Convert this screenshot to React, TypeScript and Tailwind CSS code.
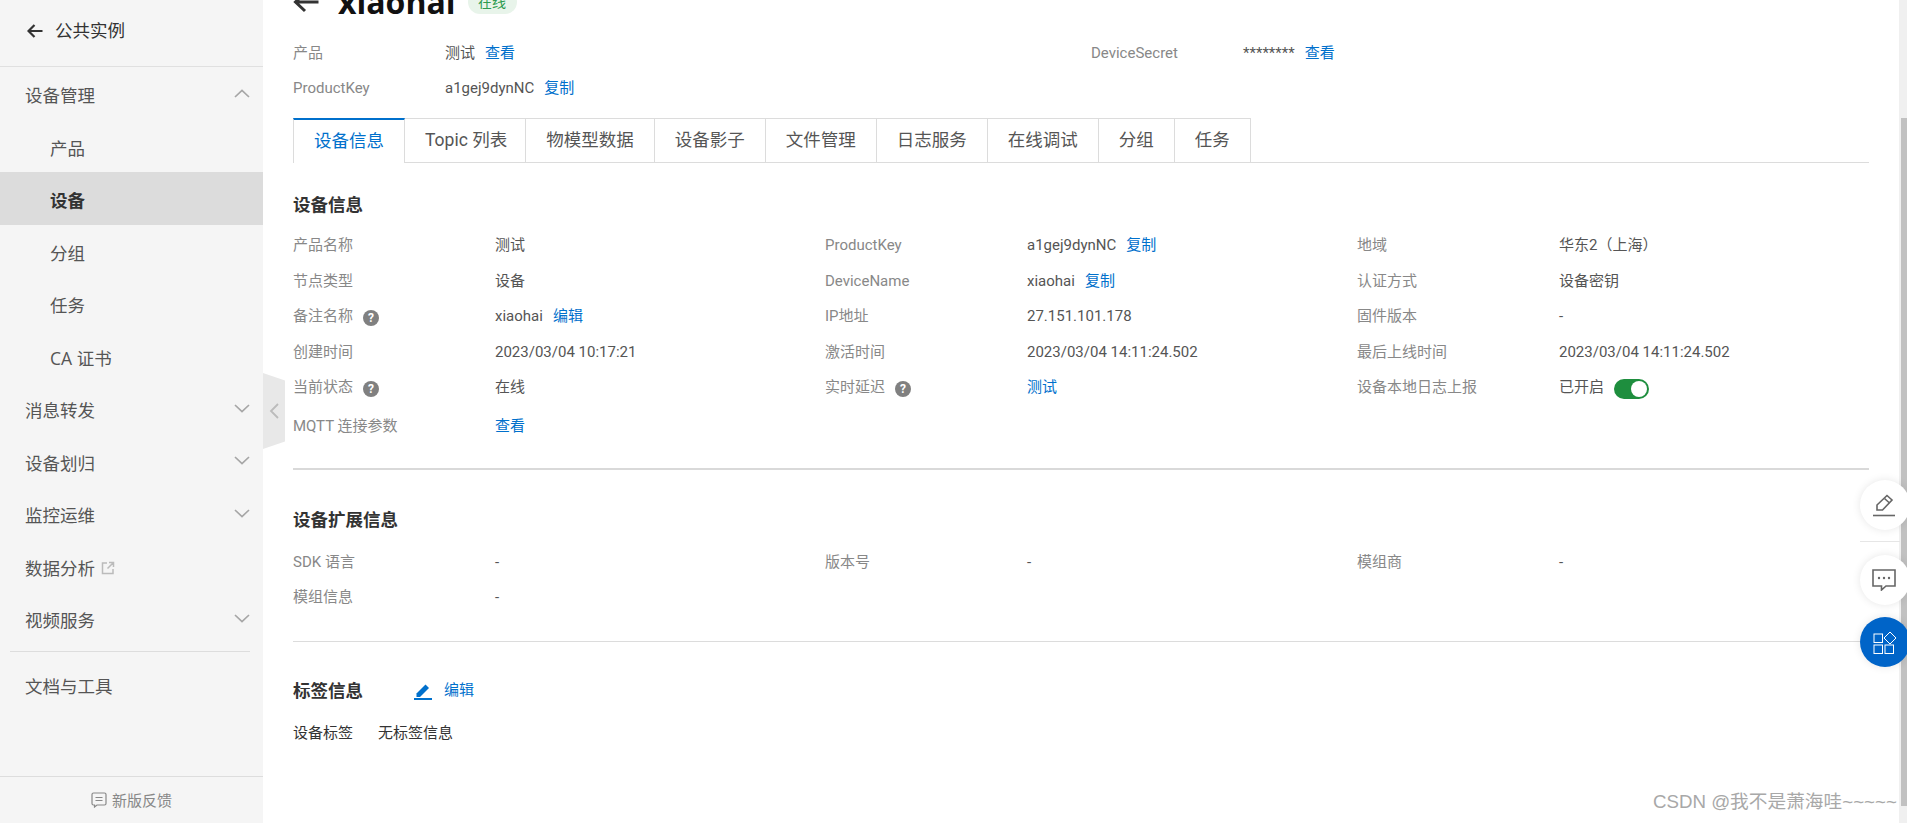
import React from "react";

const Chevron = ({ up = false }: { up?: boolean }) => (
  <svg width="16" height="9" viewBox="0 0 16 9" fill="none" className="shrink-0">
    <polyline
      points={up ? "1,8 8,1.5 15,8" : "1,1 8,7.5 15,1"}
      stroke="#a6a6a6"
      strokeWidth="1.7"
    />
  </svg>
);

const NavRow = ({
  label,
  open,
  chevron = true,
  children,
}: {
  label: string;
  open?: boolean;
  chevron?: boolean;
  children?: React.ReactNode;
}) => (
  <div className="h-[52.5px] pl-[25px] pr-[13px] flex items-center justify-between text-[17.5px] text-[#555]">
    <div className="flex items-center gap-[6px] pt-[4px]">
      {label}
      {children}
    </div>
    {chevron && <Chevron up={open} />}
  </div>
);

const SubRow = ({ label, active }: { label: string; active?: boolean }) => (
  <div
    className={
      active
        ? "h-[52.5px] pl-[50px] flex items-center text-[17.5px] pt-[4px] bg-[#dcdcdc] font-bold text-[#333]"
        : "h-[52.5px] pl-[50px] flex items-center text-[17.5px] pt-[4px] text-[#555]"
    }
  >
    {label}
  </div>
);

const Sidebar = () => (
  <div className="w-[263px] shrink-0 h-full bg-[#f5f5f5] flex flex-col">
    <div className="h-[67px] shrink-0 border-b border-[#e0e0e0] pl-[27px] pb-[5px] flex items-center gap-[12px] text-[17.5px] text-[#333]">
      <svg width="16" height="14" viewBox="0 0 16 14" fill="none">
        <path d="M15.5 7H2M7.5 1L1.5 7l6 6" stroke="#333" strokeWidth="2.2" />
      </svg>
      公共实例
    </div>
    <NavRow label="设备管理" open />
    <SubRow label="产品" />
    <SubRow label="设备" active />
    <SubRow label="分组" />
    <SubRow label="任务" />
    <SubRow label="CA 证书" />
    <NavRow label="消息转发" />
    <NavRow label="设备划归" />
    <NavRow label="监控运维" />
    <NavRow label="数据分析" chevron={false}>
      <svg width="14" height="14" viewBox="0 0 14 14" fill="none" className="mt-[1px]">
        <path d="M6 2H1.5v10.5H12V8M8 1.5h4.5V6M12.5 1.5L6.5 7.5" stroke="#bbbbbb" strokeWidth="1.5" />
      </svg>
    </NavRow>
    <NavRow label="视频服务" />
    <div className="mx-[10px] w-[240px] mt-[6px] border-t border-[#dddddd]" />
    <div className="mt-[6px]">
      <NavRow label="文档与工具" chevron={false} />
    </div>
    <div className="mt-auto h-[47px] border-t border-[#dddddd] flex items-center justify-center gap-[5px] text-[15px] text-[#888]">
      <svg width="16" height="16" viewBox="0 0 16 16" fill="none">
        <path d="M2.5 1h11A1.5 1.5 0 0 1 15 2.5v9a1.5 1.5 0 0 1-1.5 1.5H6l-2.5 2v-2h-1A1.5 1.5 0 0 1 1 11.5v-9A1.5 1.5 0 0 1 2.5 1z" stroke="#888" strokeWidth="1.2" />
        <path d="M4.5 5.5h7M4.5 8.5h7" stroke="#888" strokeWidth="1.2" />
      </svg>
      新版反馈
    </div>
  </div>
);

const Link = ({ children }: { children: React.ReactNode }) => (
  <span className="text-[#0070cc] ml-[10px]">{children}</span>
);

const Help = () => (
  <span className="ml-[10px] mt-[3px] w-[16px] h-[16px] rounded-full bg-[#808080] text-white text-[12px] font-bold flex items-center justify-center leading-none">
    ?
  </span>
);

const Field = ({
  label,
  help,
  children,
  w = "w-[202px]",
}: {
  label: string;
  help?: boolean;
  children?: React.ReactNode;
  w?: string;
}) => (
  <div className="flex items-center h-[35.5px] pb-[3px]">
    <div className={`${w} shrink-0 flex items-center text-[#888]`}>
      {label}
      {help && <Help />}
    </div>
    <div className="flex items-center text-[#555]">{children}</div>
  </div>
);

const Heading = ({ children }: { children: React.ReactNode }) => (
  <div className="h-[24px] pb-[2px] flex items-center text-[17.5px] font-bold text-[#333]">{children}</div>
);

const tabs = ["设备信息", "Topic 列表", "物模型数据", "设备影子", "文件管理", "日志服务", "在线调试", "分组", "任务"];

const Tabs = () => (
  <div className="mt-[10.5px] w-[1576px] h-[45px] flex border-b border-[#dcdcdc]">
    {tabs.map((t, i) =>
      i === 0 ? (
        <div
          key={t}
          className="h-[45px] px-[20px] flex items-center text-[17.5px] text-[#0070cc] border-t-2 border-t-[#0070cc] border-l border-l-[#dcdcdc] border-r border-r-[#dcdcdc] bg-white"
        >
          {t}
        </div>
      ) : (
        <div
          key={t}
          className={
            i === 1
              ? "h-[44px] pl-[20px] pr-[18px] flex items-center text-[17.5px] text-[#555] border-t border-t-[#dcdcdc] border-r border-r-[#dcdcdc]"
              : "h-[44px] px-[20px] flex items-center text-[17.5px] text-[#555] border-t border-t-[#dcdcdc] border-r border-r-[#dcdcdc]"
          }
        >
          {t}
        </div>
      )
    )}
  </div>
);

const Switch = () => (
  <span className="ml-[10px] mt-[3px] w-[35px] h-[20px] rounded-full bg-[#1e8e3e] flex items-center justify-end pr-[2px]">
    <span className="w-[16px] h-[16px] rounded-full bg-white" />
  </span>
);

const Main = () => (
  <div className="flex-1 h-full pl-[30px] text-[15px] overflow-hidden font-['Roboto','Noto_Sans_CJK_SC',sans-serif]">
    {/* page is scrolled a little, the title gets cut by the top edge */}
    <div className="-mt-[16px] h-[36px] flex items-center">
      <svg width="26" height="22" viewBox="0 0 26 22" fill="none">
        <path d="M25.5 11H3M12 2l-9.5 9 9.5 9" stroke="#333" strokeWidth="3" />
      </svg>
      <span className="ml-[19px] text-[32px] font-bold text-[#111] font-['Open_Sans',sans-serif]">xiaohai</span>
      <span className="ml-[12px] h-[24px] w-[49px] rounded-full bg-[#e8f4ea] text-[#2e9b4f] text-[14px] flex items-center justify-center">
        在线
      </span>
    </div>

    <div className="mt-[16.5px] w-[1596px] grid grid-cols-2">
      <Field label="产品" w="w-[152px]">
        测试<Link>查看</Link>
      </Field>
      <Field label="DeviceSecret" w="w-[152px]">
        ********<Link>查看</Link>
      </Field>
      <Field label="ProductKey" w="w-[152px]">
        a1gej9dynNC<Link>复制</Link>
      </Field>
    </div>

    <Tabs />

    <div className="mt-[31px]">
      <Heading>设备信息</Heading>
    </div>
    <div className="mt-[11px] w-[1596px] grid grid-cols-3">
      <Field label="产品名称">测试</Field>
      <Field label="ProductKey">
        a1gej9dynNC<Link>复制</Link>
      </Field>
      <Field label="地域">华东2（上海）</Field>
      <Field label="节点类型">设备</Field>
      <Field label="DeviceName">
        xiaohai<Link>复制</Link>
      </Field>
      <Field label="认证方式">设备密钥</Field>
      <Field label="备注名称" help>
        xiaohai<Link>编辑</Link>
      </Field>
      <Field label="IP地址">27.151.101.178</Field>
      <Field label="固件版本">-</Field>
      <Field label="创建时间">2023/03/04 10:17:21</Field>
      <Field label="激活时间">2023/03/04 14:11:24.502</Field>
      <Field label="最后上线时间">2023/03/04 14:11:24.502</Field>
      <Field label="当前状态" help>
        在线
      </Field>
      <Field label="实时延迟" help>
        <span className="text-[#0070cc]">测试</span>
      </Field>
      <Field label="设备本地日志上报">
        已开启
        <Switch />
      </Field>
    </div>
    <div className="mt-[3px]">
      <Field label="MQTT 连接参数">
        <span className="text-[#0070cc]">查看</span>
      </Field>
    </div>

    <div className="mt-[22.5px] w-[1576px] border-t-2 border-[#d9d9d9]" />

    <div className="mt-[40px]">
      <Heading>设备扩展信息</Heading>
    </div>
    <div className="mt-[12px] w-[1596px] grid grid-cols-3">
      <Field label="SDK 语言">-</Field>
      <Field label="版本号">-</Field>
      <Field label="模组商">-</Field>
      <Field label="模组信息">-</Field>
    </div>

    <div className="mt-[24px] w-[1576px] border-t border-[#dcdcdc]" />

    <div className="mt-[39px] flex items-center">
      <Heading>标签信息</Heading>
      <svg width="18" height="17" viewBox="0 0 18 17" fill="none" className="ml-[51px] -mt-[2px]">
        <path d="M2.5 10.5L11.5 1.5l3.5 3.5-9 9H2.5z" fill="#0070cc" />
        <rect x="0" y="15" width="18" height="2" fill="#0070cc" />
      </svg>
      <span className="ml-[12px] -mt-[5px] text-[#0070cc]">编辑</span>
    </div>
    <div className="mt-[17px] h-[24px] flex items-center text-[#333]">
      <span className="w-[85px]">设备标签</span>
      无标签信息
    </div>
  </div>
);

const Scrollbar = () => (
  <div className="w-[8px] shrink-0 h-full bg-[#f0f0f0] flex flex-col">
    <div className="h-[118px] shrink-0" />
    <div className="ml-[2px] w-[6px] h-[688px] bg-[#c1c1c1]" />
  </div>
);

const FloatButtons = () => (
  <div className="absolute left-[1850px] top-[470px] w-[57px] pl-[10px] pt-[10px] pb-[10px] overflow-hidden flex flex-col items-start">
    <div className="w-[50px] h-[50px] shrink-0 rounded-full bg-white shadow-[0_0_8px_rgba(0,0,0,0.1)] flex items-center justify-center">
      <svg width="24" height="24" viewBox="0 0 24 24" fill="none" className="-ml-[2px]">
        <path d="M15 2.5l5 4.500-9.500 10H5v-5z" stroke="#666" strokeWidth="1.6" />
        <path d="M12.5 5.5l5 4.500" stroke="#666" strokeWidth="1.6" />
        <path d="M1 22.5h22" stroke="#666" strokeWidth="1.6" />
      </svg>
    </div>
    <div className="mt-[11px] w-[40px] border-t border-[#e6e6e6]" />
    <div className="mt-[13px] w-[50px] h-[50px] shrink-0 rounded-full bg-white shadow-[0_0_8px_rgba(0,0,0,0.1)] flex items-center justify-center">
      <svg width="24" height="22" viewBox="0 0 24 22" fill="none" className="-ml-[2px]">
        <path d="M1 1h22v16H14l-4.500 4v-4H1z" stroke="#666" strokeWidth="1.6" />
        <circle cx="7" cy="9" r="1.2" fill="#666" />
        <circle cx="12" cy="9" r="1.2" fill="#666" />
        <circle cx="17" cy="9" r="1.2" fill="#666" />
      </svg>
    </div>
    <div className="mt-[12px] w-[50px] h-[50px] shrink-0 rounded-full bg-[#0064c8] shadow-[0_0_8px_rgba(0,0,0,0.1)] flex items-center justify-center">
      <svg width="24" height="24" viewBox="0 0 24 24" fill="none" className="-ml-[1px]">
        <rect x="1" y="4" width="8.5" height="8.5" stroke="#fff" />
        <rect x="1" y="15" width="8.5" height="8.5" stroke="#fff" />
        <rect x="12" y="15" width="8.5" height="8.5" stroke="#fff" />
        <path d="M17 2l6 6-6 6-6-6z" stroke="#fff" />
      </svg>
    </div>
  </div>
);

const App = () => {
  return (
    <div className="relative w-[1907px] h-[823px] overflow-hidden bg-white flex font-['Open_Sans','Noto_Sans_CJK_SC',sans-serif]">
      <Sidebar />
      <Main />
      <Scrollbar />

      {/* sidebar collapse handle */}
      <div className="absolute left-[263px] top-[373px] w-[22px] h-[76px] bg-[#e8e8e8] [clip-path:polygon(0_0,100%_10%,100%_90%,0_100%)] flex items-center justify-center">
        <svg width="10" height="16" viewBox="0 0 10 16" fill="none">
          <polyline points="9,1 2,8 9,15" stroke="#bbbbbb" strokeWidth="1.8" />
        </svg>
      </div>

      <FloatButtons />

      {/* csdn watermark */}
      <div className="absolute left-[1653px] top-[789px] text-[18.7px] leading-[26px] text-[#a8a8a8] font-['Liberation_Sans','Noto_Sans_CJK_SC',sans-serif] whitespace-nowrap">
        CSDN @我不是萧海哇~~~~~
      </div>
    </div>
  );
};

export default App;
